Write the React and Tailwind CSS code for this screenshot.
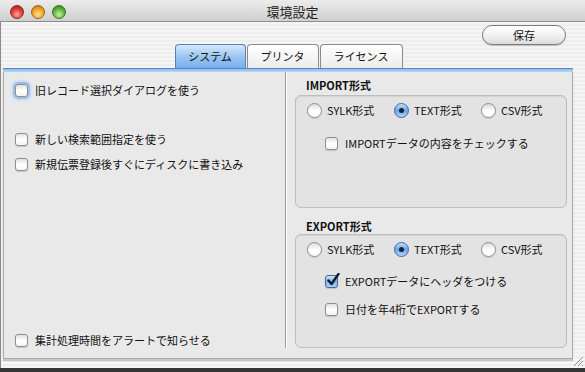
import React from 'react';

const Check = ({ on, focus }) => (
  <span
    className={`relative shrink-0 w-[13px] h-[13px] rounded-[3px] border ${
      on
        ? 'border-[#44679c] bg-linear-to-b from-[#cfe4fb] via-[#7fb3ec] to-[#a9d0f8]'
        : 'border-[#8d8d8d] bg-linear-to-b from-[#e2e2e2] via-white to-[#f4f4f4]'
    } ${focus ? 'shadow-[0_0_0_2px_#9cc0ea,0_0_3px_3px_#bcd6f3]' : 'shadow-[0_1px_1px_rgba(0,0,0,0.15)]'}`}
  >
    {on && (
      <svg className="absolute left-[1px] top-[-3px]" width="13" height="14" viewBox="0 0 13 14">
        <path d="M1.5 7.5 L4.5 11 L11.5 1" fill="none" stroke="#141c2c" strokeWidth="2.4" strokeLinecap="round" strokeLinejoin="round" />
      </svg>
    )}
  </span>
);

const Radio = ({ on }) => (
  <span
    className={`shrink-0 w-[15px] h-[15px] rounded-full border flex items-center justify-center ${
      on
        ? 'border-[#3f679f] bg-linear-to-b from-[#c3ddf9] via-[#6aa4e8] to-[#b6d6fa]'
        : 'border-[#8f8f8f] bg-linear-to-b from-[#d9d9d9] via-white to-white shadow-[0_1px_1px_rgba(0,0,0,0.12)]'
    }`}
  >
    {on && <span className="w-[5px] h-[5px] rounded-full bg-[#17223a]" />}
  </span>
);

const CheckRow = ({ label, on, focus, className = '' }) => (
  <div className={`flex items-center h-4 ${className}`}>
    <Check on={on} focus={focus} />
    <span className="ml-[7px] leading-4">{label}</span>
  </div>
);

const RadioRow = ({ value }) => (
  <div className="flex items-center h-4 pl-[11px]">
    {['SYLK形式', 'TEXT形式', 'CSV形式'].map((t, i) => (
      <div key={t} className={`flex items-center ${i < 2 ? 'w-[87px]' : ''}`}>
        <Radio on={i === value} />
        <span className="ml-[5px] leading-4">{t}</span>
      </div>
    ))}
  </div>
);

const tabs = ['システム', 'プリンタ', 'ライセンス'];

export default function App() {
  return (
    <div className="w-[585px] h-[372px] bg-[#363636] text-[11px] text-[#111] font-['Noto_Sans_CJK_JP','Liberation_Sans',sans-serif]">
      <div className="relative h-[368px] flex flex-col shadow-[inset_1px_0_0_#8a8a8a] bg-[repeating-linear-gradient(180deg,#eeeeee_0px,#eeeeee_2px,#f5f5f5_2px,#f5f5f5_4px)]">
        {/* title bar */}
        <div className="relative h-[22px] flex items-center justify-center border-b border-[#8e8e8e] bg-linear-to-b from-[#ececec] to-[#cfcfcf]">
          <div className="absolute left-[10px] top-[5px] flex gap-[7px]">
            <span className="w-[14px] h-[14px] rounded-full border border-[#8a2a26] bg-[radial-gradient(circle_at_50%_70%,#ffa39a,#d9392f_55%,#9c1c16)]" />
            <span className="w-[14px] h-[14px] rounded-full border border-[#996515] bg-[radial-gradient(circle_at_50%_70%,#ffe28a,#eea129_55%,#b36d0f)]" />
            <span className="w-[14px] h-[14px] rounded-full border border-[#3c7322] bg-[radial-gradient(circle_at_50%_70%,#c6f29a,#5db13a_55%,#2f7a18)]" />
          </div>
          <span className="text-[13px] text-[#222] leading-none mt-[1px]">環境設定</span>
        </div>

        <div className="flex-1 flex flex-col pb-[9px]">
          {/* save button */}
          <div className="flex justify-end pr-[19px] pt-[3px]">
            <button className="w-[84px] h-[20px] rounded-full border border-[#7c7c7c] bg-linear-to-b from-white via-[#f2f2f2] to-[#dcdcdc] shadow-[0_1px_1px_rgba(0,0,0,0.2)] text-[11px] leading-none">
              保存
            </button>
          </div>

          <div className="ml-[3px] w-[570px] flex-1 flex flex-col">
            {/* tabs */}
            <div className="flex justify-center pl-[2px] mt-[-1px] h-[24px]">
              {tabs.map((t, i) => (
                <div
                  key={t}
                  className={`h-[24px] flex items-center justify-center rounded-t-[4px] border border-b-0 mr-[1px] ${
                    i === 0
                      ? 'w-[71px] border-[#5b7fb8] bg-linear-to-b from-[#d7e9fb] via-[#9cc6f1] to-[#78b0ec]'
                      : i === 1
                      ? 'w-[72px] border-[#8c8c8c] bg-linear-to-b from-white to-[#ececec]'
                      : 'w-[83px] border-[#8c8c8c] bg-linear-to-b from-white to-[#ececec]'
                  }`}
                >
                  <span className="leading-none">{t}</span>
                </div>
              ))}
            </div>
            <div className="h-[4px] border-t border-[#5d86c2] bg-linear-to-b from-[#8dbdf0] to-[#b8d7f6]" />

            {/* panel */}
            <div className="flex-1 flex border-x border-b border-[#a9a9a9] bg-[#e9e9e9] pb-[10px] shadow-[0_2px_1px_rgba(0,0,0,0.18)]">
              <div className="w-[281px] flex flex-col pl-[11px] pt-[10px]">
                <CheckRow label="旧レコード選択ダイアログを使う" focus />
                <CheckRow label="新しい検索範囲指定を使う" className="mt-[33px]" />
                <CheckRow label="新規伝票登録後すぐにディスクに書き込み" className="mt-[9px]" />
                <CheckRow label="集計処理時間をアラートで知らせる" className="mt-auto" />
              </div>
              <div className="w-[2px] border-l border-[#9d9d9d] bg-white" />

              <div className="flex-1 flex flex-col pl-[8px] pr-[5px] pt-[6px]">
                <div className="h-[14px] leading-[14px] pl-[11px] font-bold">IMPORT形式</div>
                <div className="mt-[3px] h-[113px] rounded-[6px] border border-[#bdbdbd] bg-[#e3e3e3] shadow-[inset_0_1px_0_#d4d4d4] pt-[6px]">
                  <RadioRow value={1} />
                  <CheckRow label="IMPORTデータの内容をチェックする" className="mt-[17px] pl-[29px]" />
                </div>
                <div className="mt-[11px] h-[14px] leading-[14px] pl-[11px] font-bold">EXPORT形式</div>
                <div className="mt-[1px] flex-1 rounded-[6px] border border-[#bdbdbd] bg-[#e3e3e3] shadow-[inset_0_1px_0_#d4d4d4] pt-[6px]">
                  <RadioRow value={1} />
                  <CheckRow label="EXPORTデータにヘッダをつける" on className="mt-[16px] pl-[29px]" />
                  <CheckRow label="日付を年4桁でEXPORTする" className="mt-[12px] pl-[29px]" />
                </div>
              </div>
            </div>
          </div>
        </div>

        {/* resize grip */}
        <svg className="absolute right-[1px] bottom-[1px]" width="12" height="12" viewBox="0 0 12 12">
          <path d="M11 2 L2 11 M11 6 L6 11 M11 10 L10 11" stroke="#8a8a8a" strokeWidth="1" />
          <path d="M11 3 L3 11 M11 7 L7 11" stroke="#ffffff" strokeWidth="1" />
        </svg>
      </div>
    </div>
  );
}
